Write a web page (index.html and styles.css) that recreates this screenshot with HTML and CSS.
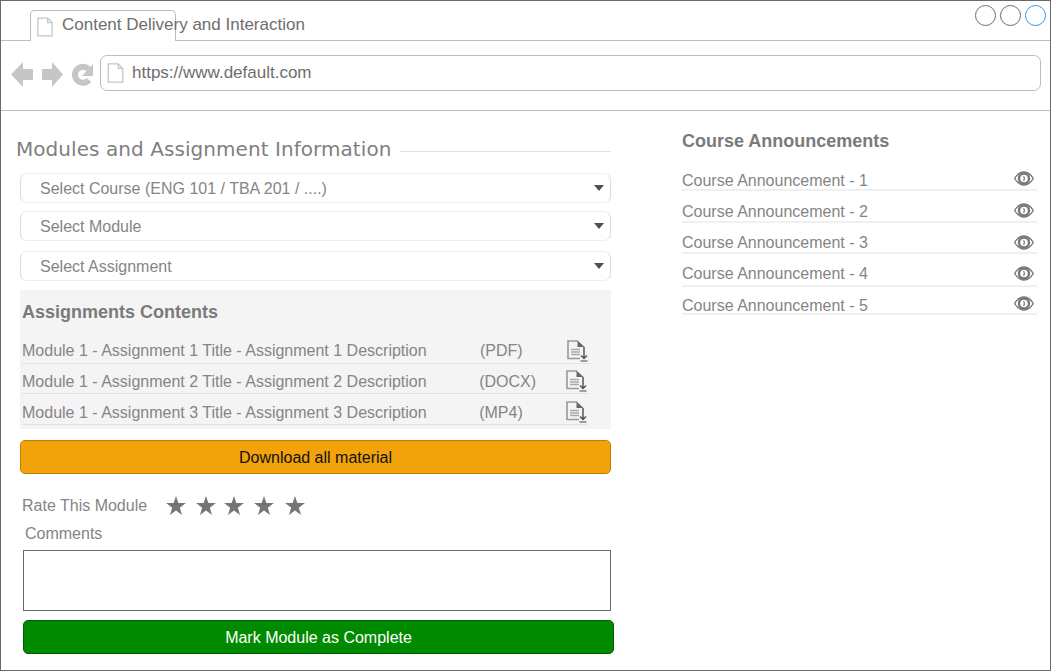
FILE: index.html
```html
<!DOCTYPE html>
<html lang="en">
<head>
    <meta charset="UTF-8">
    <meta name="viewport" content="width=device-width, initial-scale=1.0">
    <title>Content Delivery and Interaction</title>
    <link rel="stylesheet" href="styles.css">
</head>
<body>
    <svg class="sprites" width="0" height="0">
        <symbol id="page" viewBox="0 0 18 22">
            <path d="M1 1H12L17 6V21H1Z M12 1V6H17" fill="#fff" stroke="#c4c4c4" stroke-width="1.4"/>
        </symbol>
        <symbol id="filedown" viewBox="0 0 22 22">
            <path d="M11 1H1V18.500H13" fill="none" stroke="#999" stroke-width="1.6"/>
            <path d="M10.500 .5L17.500 7H10.500Z" fill="#666"/>
            <path d="M4 9.500H13M4 12H13M4 14.500H13" stroke="#aaa" stroke-width="1.4"/>
            <path d="M17 7V18.500M14 15.500L17 18.500L20 15.500" fill="none" stroke="#555" stroke-width="1.5"/>
            <path d="M13.500 21H20.500" stroke="#777" stroke-width="1.4"/>
        </symbol>
        <symbol id="eye" viewBox="0 0 20 15">
            <path d="M.7 7.5C3.5 2.8 6.5 1 10 1S16.5 2.8 19.3 7.5C16.5 12.2 13.500 14 10 14S3.500 12.200 .7 7.500Z" fill="none" stroke="#777" stroke-width="1.4"/>
            <circle cx="10" cy="7.5" r="5" fill="none" stroke="#777" stroke-width="2.4"/>
            <path d="M9.500 5Q11.500 7.500 9.500 10" fill="none" stroke="#888" stroke-width="1.200"/>
        </symbol>
        <symbol id="star" viewBox="0 0 22 21">
            <polygon points="11,0 13.6,7.8 22,7.8 15.2,12.9 17.7,21 11,16 4.3,21 6.8,12.9 0,7.8 8.4,7.8" fill="#757575"/>
        </symbol>
    </svg>

    <div class="browser">
        <div class="tabbar">
            <div class="tab">
                <svg class="tab-icon"><use href="#page"/></svg>
                <span>Content Delivery and Interaction</span>
            </div>
            <div class="win-btns">
                <span class="win-btn"></span>
                <span class="win-btn"></span>
                <span class="win-btn active"></span>
            </div>
        </div>

        <div class="toolbar">
            <svg class="nav-icons" width="84" height="25" viewBox="0 0 84 25">
                <path d="M0 12.5L12 0V7H22V18H12V25Z" fill="#c6c6c6"/>
                <path d="M52 12.5L41 0V7H31V18H41V25Z" fill="#c6c6c6"/>
                <path d="M77.5 7A8 8 0 1 0 78 18" fill="none" stroke="#c6c6c6" stroke-width="6"/>
                <path d="M82 2V14H71Z" fill="#c6c6c6"/>
            </svg>
            <div class="url-box">
                <svg class="url-icon"><use href="#page"/></svg>
                <span>https://www.default.com</span>
            </div>
        </div>

        <div class="content">
            <div class="left-col">
                <div class="section-title">
                    <h2>Modules and Assignment Information</h2>
                    <div class="title-line"></div>
                </div>

                <div class="select-box first"><span>Select Course (ENG 101 / TBA 201 / ....)</span><i class="caret"></i></div>
                <div class="select-box"><span>Select Module</span><i class="caret"></i></div>
                <div class="select-box third"><span>Select Assignment</span><i class="caret"></i></div>

                <div class="contents-panel">
                    <h3>Assignments Contents</h3>
                    <div class="file-row">
                        <span class="file-name">Module 1 - Assignment 1 Title - Assignment 1 Description</span>
                        <span class="file-type">(PDF)</span>
                        <svg class="file-icon"><use href="#filedown"/></svg>
                    </div>
                    <div class="file-row">
                        <span class="file-name">Module 1 - Assignment 2 Title - Assignment 2 Description</span>
                        <span class="file-type">(DOCX)</span>
                        <svg class="file-icon"><use href="#filedown"/></svg>
                    </div>
                    <div class="file-row">
                        <span class="file-name">Module 1 - Assignment 3 Title - Assignment 3 Description</span>
                        <span class="file-type">(MP4)</span>
                        <svg class="file-icon"><use href="#filedown"/></svg>
                    </div>
                </div>

                <button class="btn btn-orange">Download all material</button>

                <div class="rating">
                    <span>Rate This Module</span>
                    <div class="stars">
                        <svg class="star"><use href="#star"/></svg>
                        <svg class="star"><use href="#star"/></svg>
                        <svg class="star"><use href="#star"/></svg>
                        <svg class="star"><use href="#star"/></svg>
                        <svg class="star"><use href="#star"/></svg>
                    </div>
                </div>

                <label class="comments-label">Comments</label>
                <div class="comments-box"></div>
                <button class="btn btn-green">Mark Module as Complete</button>
            </div>

            <div class="right-col">
                <h3>Course Announcements</h3>
                <div class="announce-row"><span>Course Announcement - 1</span><svg class="eye"><use href="#eye"/></svg></div>
                <div class="announce-row"><span>Course Announcement - 2</span><svg class="eye"><use href="#eye"/></svg></div>
                <div class="announce-row"><span>Course Announcement - 3</span><svg class="eye"><use href="#eye"/></svg></div>
                <div class="announce-row"><span>Course Announcement - 4</span><svg class="eye"><use href="#eye"/></svg></div>
                <div class="announce-row"><span>Course Announcement - 5</span><svg class="eye"><use href="#eye"/></svg></div>
            </div>
        </div>
    </div>
</body>
</html>
```
FILE: styles.css
```css
body {
    margin: 0;
    font-family: "Liberation Sans", Arial, sans-serif;
    background-color: #fff;
    color: #858585;
}
h2, h3 {
    margin: 0;
}
.sprites {
    display: block;
    height: 0;
}
.browser {
    box-sizing: border-box;
    width: 1051px;
    height: 671px;
    border: 1px solid #6a6a6a;
    overflow: hidden;
}

/* Tab bar */
.tabbar {
    box-sizing: border-box;
    display: flex;
    justify-content: space-between;
    height: 40px;
    padding: 9px 3px 0 29px;
    border-bottom: 1px solid #bdbdbd;
}
.tab {
    box-sizing: border-box;
    display: flex;
    align-items: flex-start;
    width: 146px;
    height: 31px;
    padding: 4px 0 0 6px;
    border: 1px solid #bdbdbd;
    border-bottom: none;
    border-radius: 5px 5px 0 0;
    background-color: #fff;
    color: #6e6e6e;
    font-size: 17px;
    white-space: nowrap;
}
.tab-icon {
    flex: none;
    width: 16px;
    height: 20px;
    margin: 2px 9px 0 0;
}
.win-btns {
    display: flex;
    gap: 4px;
    margin-top: -5px;
    padding-right: 1px;
}
.win-btn {
    box-sizing: border-box;
    width: 21px;
    height: 21px;
    border: 1px solid #6a6a6a;
    border-radius: 50%;
}
.win-btn.active {
    border-color: #2f96f3;
}

/* Address bar */
.toolbar {
    box-sizing: border-box;
    display: flex;
    align-items: flex-start;
    height: 70px;
    padding: 14px 9px 0 10px;
    border-bottom: 1px solid #bdbdbd;
}
.nav-icons {
    flex: none;
    margin: 7px 5px 0 0;
}
.url-box {
    box-sizing: border-box;
    flex: 1;
    display: flex;
    align-items: center;
    height: 36px;
    padding: 0 0 0 6px;
    border: 1px solid #bdbdbd;
    border-radius: 7px;
    color: #6e6e6e;
    font-size: 17px;
}
.url-icon {
    width: 17px;
    height: 20px;
    margin-right: 8px;
}

/* Main content */
.content {
    display: grid;
    grid-template-columns: 598px 355px;
    gap: 68px;
    padding-left: 15px;
}
.section-title {
    display: flex;
    align-items: center;
    height: 26px;
    margin-top: 25px;
    padding-right: 3px;
}
.section-title h2 {
    font-family: "DejaVu Sans", Verdana, sans-serif;
    font-size: 20px;
    font-weight: normal;
    letter-spacing: 0.06px;
    white-space: nowrap;
    color: #808080;
}
.title-line {
    flex: 1;
    height: 1px;
    margin: 5px 0 0 9px;
    background-color: #e2e2e2;
}
.select-box {
    box-sizing: border-box;
    display: flex;
    justify-content: space-between;
    align-items: center;
    width: 591px;
    height: 30px;
    margin: 8px 0 0 4px;
    padding: 0 6px 0 19px;
    border: 1px solid #eee;
    border-left-color: #ddd;
    border-right-color: #ddd;
    border-radius: 7px;
    font-size: 16px;
}
.select-box span {
    margin-top: 2px;
}
.select-box.first {
    margin-top: 11px;
}
.select-box.third {
    margin-top: 10px;
}
.caret {
    width: 0;
    height: 0;
    border-left: 5.5px solid transparent;
    border-right: 5.5px solid transparent;
    border-top: 6px solid #4d4f55;
}

/* Assignments panel */
.contents-panel {
    box-sizing: border-box;
    width: 591px;
    height: 139px;
    margin: 9px 0 0 4px;
    padding: 12px 0 0 2px;
    background-color: #f4f4f4;
}
.contents-panel h3 {
    height: 20px;
    margin-bottom: 11px;
    font-size: 18px;
    line-height: 20px;
    color: #7a7a7a;
}
.file-row {
    box-sizing: border-box;
    display: flex;
    align-items: flex-start;
    width: 568px;
    height: 31px;
    padding-top: 9px;
    border-bottom: 1px solid #e2e2e2;
    font-size: 16px;
    line-height: 18px;
}
.file-row:nth-child(3), .file-row:nth-child(4) {
    width: 566px;
}
.file-row:nth-child(3) {
    height: 30px;
}
.file-row:nth-child(4) {
    padding-top: 10px;
}
.file-name {
    width: 458px;
    white-space: nowrap;
}
.file-type {
    width: 87px;
}
.file-icon {
    flex: none;
    width: 22px;
    height: 22px;
    margin-top: -2px;
}
.file-row:nth-child(3) .file-icon, .file-row:nth-child(4) .file-icon {
    margin-top: -3px;
}

/* Buttons */
.btn {
    display: block;
    box-sizing: border-box;
    height: 34px;
    padding: 2px 0 0;
    border-radius: 5px;
    font-family: "Liberation Sans", Arial, sans-serif;
    font-size: 16px;
}
.btn-orange {
    width: 591px;
    margin: 11px 0 0 4px;
    background-color: #f2a30b;
    border: 1px solid #c57c06;
    color: #111;
}
.btn-green {
    width: 591px;
    margin: 9px 0 0 7px;
    background-color: #008a00;
    border: 1px solid #005f00;
    color: #fff;
}

/* Rating and comments */
.rating {
    display: flex;
    align-items: center;
    height: 22px;
    margin: 21px 0 0 6px;
    font-size: 16px;
}
.stars {
    display: flex;
    gap: 10px;
    margin: -2px 0 0 19px;
}
.star {
    width: 20px;
    height: 19px;
}
.star:nth-child(3) {
    margin-left: -2px;
}
.star:nth-child(5) {
    margin-left: 1px;
}
.comments-label {
    display: block;
    height: 20px;
    margin: 7px 0 0 9px;
    font-size: 16px;
    line-height: 20px;
}
.comments-box {
    box-sizing: border-box;
    width: 588px;
    height: 61px;
    margin: 6px 0 0 7px;
    border: 1px solid #6a6a6a;
}

/* Announcements */
.right-col h3 {
    height: 22px;
    margin-top: 19px;
    font-size: 18px;
    line-height: 22px;
    color: #7a7a7a;
}
.announce-row {
    box-sizing: border-box;
    display: flex;
    justify-content: space-between;
    align-items: flex-start;
    padding: 12px 3px 1px 0;
    border-bottom: 2px solid #f0f0f0;
    font-size: 16px;
    line-height: 16px;
}
.announce-row:nth-child(2) {
    padding-top: 21px;
    padding-bottom: 0;
}
.announce-row:nth-child(3) {
    padding-top: 13px;
}
.announce-row:nth-child(5) {
    padding-bottom: 3px;
}
.announce-row:nth-child(6) {
    height: 28px;
    padding-top: 11px;
    padding-bottom: 0;
}
.eye {
    flex: none;
    width: 20px;
    height: 15px;
}
.announce-row:nth-child(2) .eye, .announce-row:nth-child(6) .eye {
    margin-top: -2px;
}
.announce-row:nth-child(3) .eye {
    margin-top: -1px;
}
```
